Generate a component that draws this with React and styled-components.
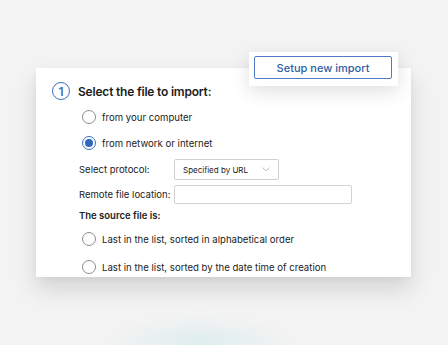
import React from "react";
import styled, { createGlobalStyle } from "styled-components";

const Global = createGlobalStyle`
  html, body { margin: 0; padding: 0; background: #f3f3f3; }
  body { font-family: Inter, "Noto Sans", Arial, sans-serif; color: #1f1f1f; }
`;

const Page = styled.div`
  position: relative;
  width: 448px;
  height: 345px;
  overflow: hidden;
  padding: 68px 0 0 36px;
  box-sizing: border-box;
`;

const Glow = styled.div`
  position: absolute;
  left: 110px;
  top: 318px;
  width: 180px;
  height: 50px;
  border-radius: 50%;
  background: radial-gradient(ellipse at center, rgba(200, 232, 236, 0.55), rgba(243, 243, 243, 0) 70%);
  filter: blur(6px);
`;

const Card = styled.div`
  position: relative;
  width: 375px;
  height: 209px;
  background: #fff;
  box-shadow: 0 12px 22px rgba(0, 0, 0, 0.13), 0 2px 6px rgba(0, 0, 0, 0.04);
  padding: 13px 0 0 16px;
  box-sizing: border-box;
  display: flex;
  flex-direction: column;
`;

const Popup = styled.div`
  position: absolute;
  left: 213px;
  top: -16px;
  width: 149px;
  height: 34px;
  background: #fff;
  box-shadow: 0 6px 18px rgba(0, 0, 0, 0.12);
  padding: 4px 6px 7px 5px;
  box-sizing: border-box;
  display: flex;
`;

const ImportButton = styled.button`
  flex: 1;
  border: 1px solid #4d7cc2;
  border-radius: 2px;
  background: #fff;
  color: #2e5ea6;
  font-family: Inter, "Noto Sans", Arial, sans-serif;
  font-size: 11px;
  font-weight: 500;
  padding: 0;
  cursor: pointer;
`;

const Header = styled.div`
  display: flex;
  align-items: center;
  gap: 8px;
  height: 20px;
`;

const StepCircle = styled.div`
  width: 16px;
  height: 16px;
  border: 1.7px solid #3c6fb8;
  border-radius: 50%;
  color: #3c6fb8;
  font-size: 12px;
  font-weight: 600;
  display: flex;
  align-items: center;
  justify-content: center;
`;

const Title = styled.div`
  font-size: 12px;
  font-weight: 600;
  letter-spacing: -0.2px;
  color: #1c1c1c;
`;

const Body = styled.div`
  display: flex;
  flex-direction: column;
  padding-left: 27px;
`;

const Row = styled.div`
  display: flex;
  align-items: center;
  height: ${(p) => p.$h || 20}px;
  margin-top: ${(p) => p.$mt || 0}px;
  padding-left: ${(p) => p.$indent || 0}px;
`;

const Radio = styled.span`
  width: 14px;
  height: 14px;
  border-radius: 50%;
  border: 1px solid ${(p) => (p.$checked ? "#3b70c2" : "#8e8e8e")};
  box-sizing: border-box;
  margin-right: 6px;
  display: flex;
  align-items: center;
  justify-content: center;
  flex: none;
  &::after {
    content: "";
    display: ${(p) => (p.$checked ? "block" : "none")};
    width: 8px;
    height: 8px;
    border-radius: 50%;
    background: #2f66c0;
  }
`;

const Text = styled.span`
  font-size: 9.6px;
  color: #222;
`;

const Label = styled.span`
  font-size: 9.5px;
  color: #222;
  width: ${(p) => p.$w || "auto"};
  font-weight: ${(p) => (p.$bold ? 600 : 400)};
`;

const Select = styled.div`
  width: 105px;
  height: 21px;
  border: 1px solid #cfcfcf;
  border-radius: 2px;
  box-sizing: border-box;
  display: flex;
  align-items: center;
  justify-content: space-between;
  padding: 0 8px 0 8px;
  font-size: 8px;
  color: #222;
`;

const Input = styled.div`
  width: 178px;
  height: 19px;
  border: 1px solid #d4d4d4;
  border-radius: 2px;
  box-sizing: border-box;
  margin-left: 2px;
`;

const Chevron = () => (
  <svg width="8" height="5" viewBox="0 0 8 5">
    <path d="M0.5 0.5 L4 4 L7.5 0.5" fill="none" stroke="#b5b5b5" strokeWidth="0.9" />
  </svg>
);

export default function App() {
  return (
    <>
      <Global />
      <Page>
        <Glow />
        <Card>
          <Popup>
            <ImportButton>Setup new import</ImportButton>
          </Popup>
          <Header>
            <StepCircle>1</StepCircle>
            <Title>Select the file to import:</Title>
          </Header>
          <Body>
            <Row $mt={6} $indent={3}>
              <Radio />
              <Text>from your computer</Text>
            </Row>
            <Row $mt={6} $indent={3}>
              <Radio $checked />
              <Text>from network or internet</Text>
            </Row>
            <Row $h={21} $mt={6}>
              <Label $w="95px">Select protocol:</Label>
              <Select>
                <span>Specified by URL</span>
                <Chevron />
              </Select>
            </Row>
            <Row $h={19} $mt={5}>
              <Label $w="93px">Remote file location:</Label>
              <Input />
            </Row>
            <Row $h={16} $mt={3}>
              <Label $bold>The source file is:</Label>
            </Row>
            <Row $mt={6} $indent={3}>
              <Radio />
              <Text>Last in the list, sorted in alphabetical order</Text>
            </Row>
            <Row $mt={8} $indent={3}>
              <Radio />
              <Text>Last in the list, sorted by the date time of creation</Text>
            </Row>
          </Body>
        </Card>
      </Page>
    </>
  );
}
